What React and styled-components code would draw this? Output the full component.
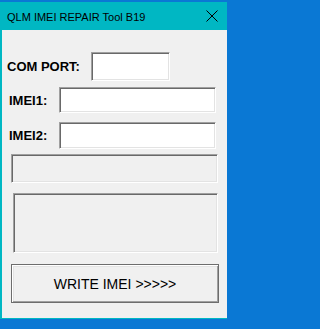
import styled, { createGlobalStyle } from "styled-components";

const Global = createGlobalStyle`
  html, body {
    margin: 0;
    padding: 0;
    background: #0a78d4;
  }
  body {
    height: 329px;
    overflow: hidden;
  }
`;

const App = () => {
  return (
    <>
      <Global />
      <Window>
        <TitleBar>
          <Title>QLM IMEI REPAIR Tool B19</Title>
          <CloseButton>
            <svg width="12" height="12" viewBox="0 0 12 12">
              <path d="M0.5 0.5 L11.5 11.5 M11.5 0.5 L0.5 11.5" stroke="#000" strokeWidth="1" />
            </svg>
          </CloseButton>
        </TitleBar>
        <Client>
          <Row $top={22}>
            <Label $width={84}>COM PORT:</Label>
            <Field $width={79} $height={29} />
          </Row>
          <Row $top={6}>
            <Label $width={52} $indent={2}>IMEI1:</Label>
            <Field $width={157} $height={26} />
          </Row>
          <Row $top={9}>
            <Label $width={52} $indent={2}>IMEI2:</Label>
            <Field $width={157} $height={27} />
          </Row>
          <StatusBox $left={9} $width={207} $height={29} $top={5} />
          <StatusBox $left={11} $width={205} $height={60} $top={10} />
          <WriteButton>WRITE IMEI &gt;&gt;&gt;&gt;&gt;</WriteButton>
        </Client>
      </Window>
    </>
  );
};

const Window = styled.div`
  margin-top: 2px;
  width: 227px;
  border-left: 2px solid #00b7c3;
  border-bottom: 1px solid #00b7c3;
  box-sizing: border-box;
  display: flex;
  flex-direction: column;
`;

const TitleBar = styled.div`
  height: 28px;
  background: #00b7c3;
  display: flex;
  align-items: center;
  justify-content: space-between;
  padding: 0 9px 0 5px;
`;

const Title = styled.span`
  font-family: "Liberation Sans", Arial, sans-serif;
  font-size: 11px;
  color: #000;
  padding-top: 1px;
`;

const CloseButton = styled.div`
  width: 12px;
  height: 12px;
  display: flex;
  svg {
    display: block;
  }
`;

const Client = styled.div`
  height: 288px;
  background: #f0f0f0;
  display: flex;
  flex-direction: column;
  box-sizing: border-box;
`;

const Row = styled.div`
  display: flex;
  align-items: center;
  margin-top: ${(p) => p.$top}px;
  padding-left: 5px;
`;

const Label = styled.span`
  width: ${(p) => p.$width}px;
  padding-left: ${(p) => p.$indent || 0}px;
  box-sizing: border-box;
  font-family: "Liberation Sans", Arial, sans-serif;
  font-weight: bold;
  font-size: 13px;
  color: #000;
`;

const sunken = `
  box-sizing: border-box;
  border-style: solid;
  border-width: 1px;
  border-color: #a0a0a0 #ffffff #ffffff #a0a0a0;
  box-shadow: inset 1px 1px 0 #696969, inset -1px -1px 0 #e3e3e3;
`;

const Field = styled.div`
  ${sunken}
  width: ${(p) => p.$width}px;
  height: ${(p) => p.$height}px;
  background: #fff;
`;

const StatusBox = styled.div`
  ${sunken}
  margin-top: ${(p) => p.$top}px;
  margin-left: ${(p) => p.$left}px;
  width: ${(p) => p.$width}px;
  height: ${(p) => p.$height}px;
  background: #f0f0f0;
`;

const WriteButton = styled.button`
  margin: 11px 0 0 9px;
  width: 208px;
  height: 39px;
  box-sizing: border-box;
  background: #f0f0f0;
  border: 1px solid #6d6d6d;
  box-shadow: inset 1px 1px 0 #ffffff, inset -1px -1px 0 #a0a0a0, inset 2px 2px 0 #e3e3e3;
  font-family: "Liberation Sans", Arial, sans-serif;
  font-size: 14px;
  color: #000;
  padding: 0;
  cursor: pointer;
`;

export default App;
